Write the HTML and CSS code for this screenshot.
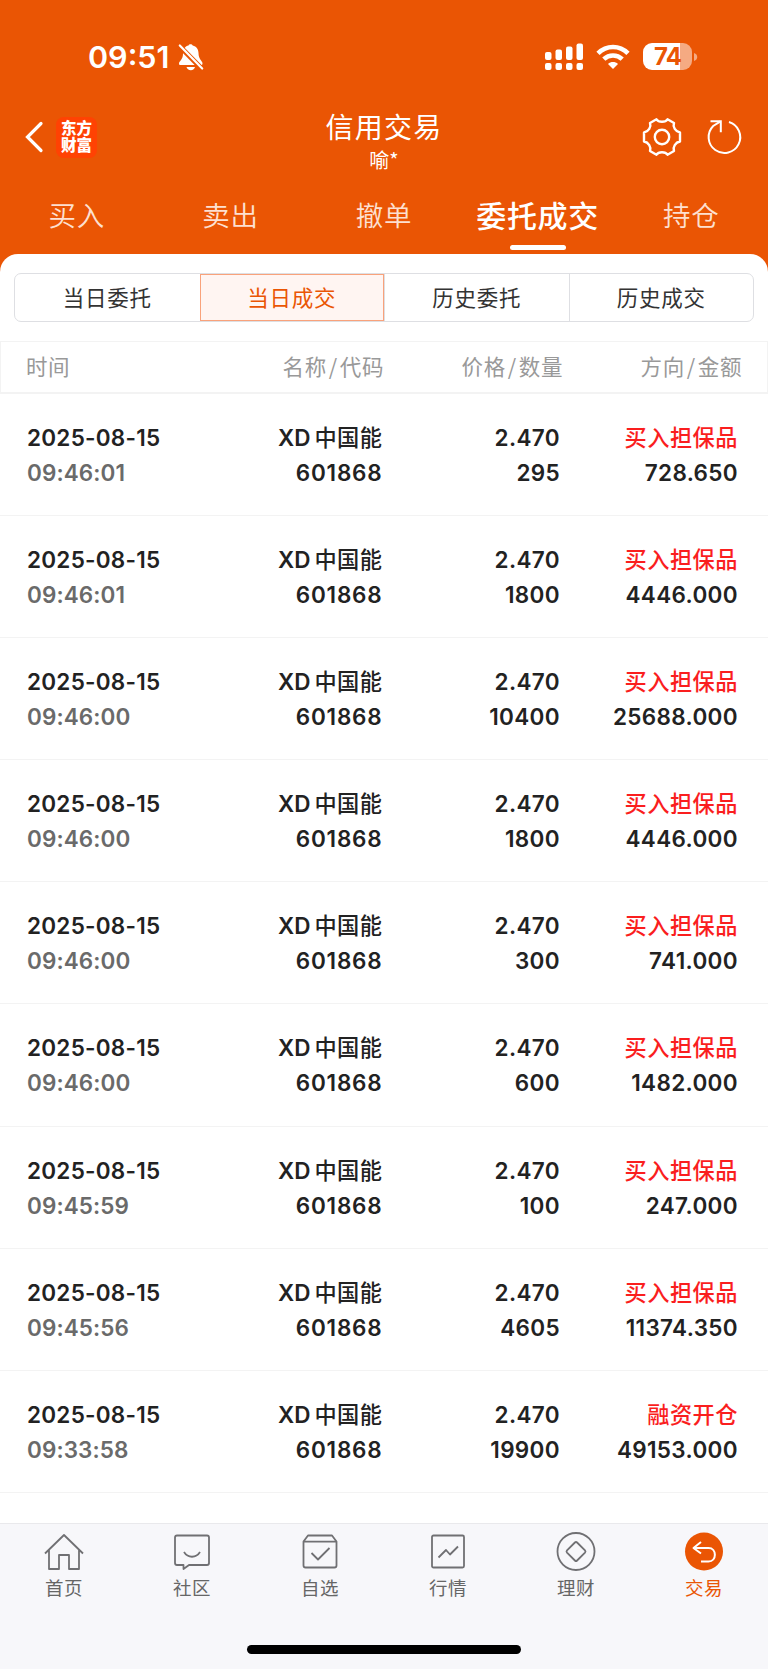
FILE: index.html
```html
<!DOCTYPE html>
<html lang="zh-CN">
<head>
<meta charset="utf-8">
<title>信用交易</title>
<link rel="stylesheet" href="styles.css">
</head>
<body>
<div class="screen">
  <header class="top">
    <div class="status">
      <div class="status-left">
        <span class="clock">09:51</span>
        <svg class="bell" width="26" height="28" viewBox="0 0 26 28">
          <path d="M1 20.500C1 18 5 17 5 10.500C5 6 7.500 3 10.500 2.500C11 .8 14 .8 14.700 2.500C18.500 3.200 20.500 6.500 20.500 10C20.500 16.500 24.500 18 24.500 20.500C24.500 21.600 23.800 22 23 22H2.500C1.600 22 1 21.600 1 20.500Z" fill="#fff"/>
          <path d="M8.500 24H17C16.500 26 15 27.200 12.800 27.200S9 26 8.500 24Z" fill="#fff"/>
          <path d="M-1 .5L25 27" stroke="#ea5504" stroke-width="5"/>
          <path d="M1.800 2.500L24.200 25.500" stroke="#fff" stroke-width="2.200" stroke-linecap="round"/>
        </svg>
      </div>
      <div class="status-right">
        <svg width="39" height="28" viewBox="0 0 39 28" fill="#fff">
          <rect x="0" y="9" width="6.500" height="8" rx="2"/><rect x="10.500" y="6.500" width="6.500" height="10.500" rx="2"/><rect x="21" y="3.500" width="6.500" height="13.500" rx="2"/><rect x="31.500" y="0.500" width="6.500" height="16.500" rx="2"/>
          <rect x="0" y="20" width="6.500" height="7" rx="2"/><rect x="10.500" y="20" width="6.500" height="7" rx="2"/><rect x="21" y="20" width="6.500" height="7" rx="2"/><rect x="31.500" y="20" width="6.500" height="7" rx="2"/>
        </svg>
        <svg class="wifi" width="34" height="26" viewBox="0 0 34 26" fill="none" stroke="#fff" stroke-width="4.600">
          <path d="M2 9.300C10.500 .9 23.500 .9 32 9.300"/>
          <path d="M7.800 15.200C13 10.200 21 10.200 26.200 15.200"/>
          <path d="M17 25L12 20C14.800 17.400 19.200 17.400 22 20Z" fill="#fff" stroke="none"/>
        </svg>
        <div class="battery"><span class="battery-body">74</span><svg width="4" height="8" viewBox="0 0 4 8"><path d="M0 0C4.300 1.300 4.300 6.700 0 8Z" fill="#f5aa82"/></svg></div>
      </div>
    </div>

    <div class="nav">
      <div class="nav-left">
        <svg width="18" height="32" viewBox="0 0 18 32"><path d="M16 2.500L2.500 16L16 29.500" fill="none" stroke="#fff" stroke-width="3.200" stroke-linecap="round"/></svg>
        <div class="logo">东方财富</div>
      </div>
      <div class="heading"><h1>信用交易</h1><p>喻*</p></div>
      <div class="nav-right">
        <svg width="40" height="40" viewBox="0 0 40 40" fill="none" stroke="#fff" stroke-width="2.400" stroke-linejoin="round">
          <path d="M14.500 2.300C16.500 5.500 23.500 5.500 25.500 2.300L32 6C30.500 10 33.500 14.700 38 15.500V24.500C33.500 25.300 30.500 30 32 34L25.500 37.700C23.500 34.500 16.500 34.500 14.500 37.700L8 34C9.500 30 6.500 25.300 2 24.500V15.500C6.500 14.700 9.500 10 8 6Z"/>
          <circle cx="20" cy="20" r="7.200"/>
        </svg>
        <svg width="36" height="36" viewBox="0 0 36 36" fill="none" stroke="#fff" stroke-width="2">
          <path d="M22 3A15.800 15.800 0 1 1 6.200 7L13.500 2.300"/>
          <path d="M3.500 2.300H13.800V13.200"/>
        </svg>
      </div>
    </div>

    <nav class="tabs">
      <span class="tab">买入</span><span class="tab">卖出</span><span class="tab">撤单</span><span class="tab tab-active">委托成交</span><span class="tab">持仓</span>
    </nav>
  </header>

  <main class="panel">
    <div class="segments">
      <span class="segment">当日委托</span><span class="segment segment-active">当日成交</span><span class="segment">历史委托</span><span class="segment">历史成交</span>
    </div>
    <div class="table-head"><span>时间</span><span>名称<i>/</i>代码</span><span>价格<i>/</i>数量</span><span>方向<i>/</i>金额</span></div>
    <div class="rows">
      <div class="row"><div><u>2025-08-15</u><br><em>09:46:01</em></div><div class="stock"><b>XD</b><s>中国能</s><br>601868</div><div>2.470<br>295</div><div><strong>买入担保品</strong><br>728.650</div></div>
      <div class="row"><div><u>2025-08-15</u><br><em>09:46:01</em></div><div class="stock"><b>XD</b><s>中国能</s><br>601868</div><div>2.470<br>1800</div><div><strong>买入担保品</strong><br>4446.000</div></div>
      <div class="row"><div><u>2025-08-15</u><br><em>09:46:00</em></div><div class="stock"><b>XD</b><s>中国能</s><br>601868</div><div>2.470<br>10400</div><div><strong>买入担保品</strong><br>25688.000</div></div>
      <div class="row"><div><u>2025-08-15</u><br><em>09:46:00</em></div><div class="stock"><b>XD</b><s>中国能</s><br>601868</div><div>2.470<br>1800</div><div><strong>买入担保品</strong><br>4446.000</div></div>
      <div class="row"><div><u>2025-08-15</u><br><em>09:46:00</em></div><div class="stock"><b>XD</b><s>中国能</s><br>601868</div><div>2.470<br>300</div><div><strong>买入担保品</strong><br>741.000</div></div>
      <div class="row"><div><u>2025-08-15</u><br><em>09:46:00</em></div><div class="stock"><b>XD</b><s>中国能</s><br>601868</div><div>2.470<br>600</div><div><strong>买入担保品</strong><br>1482.000</div></div>
      <div class="row"><div><u>2025-08-15</u><br><em>09:45:59</em></div><div class="stock"><b>XD</b><s>中国能</s><br>601868</div><div>2.470<br>100</div><div><strong>买入担保品</strong><br>247.000</div></div>
      <div class="row"><div><u>2025-08-15</u><br><em>09:45:56</em></div><div class="stock"><b>XD</b><s>中国能</s><br>601868</div><div>2.470<br>4605</div><div><strong>买入担保品</strong><br>11374.350</div></div>
      <div class="row"><div><u>2025-08-15</u><br><em>09:33:58</em></div><div class="stock"><b>XD</b><s>中国能</s><br>601868</div><div>2.470<br>19900</div><div><strong>融资开仓</strong><br>49153.000</div></div>
    </div>
  </main>

  <footer class="bottom">
    <nav class="dock">
      <a class="dock-item"><svg viewBox="0 0 40 40"><path d="M1 21.500L20 3L39 21.500M5 18V37H15V23H25V37H35V18"/></svg>首页</a>
      <a class="dock-item"><svg viewBox="0 0 40 40"><path d="M5 3.500H35Q37 3.500 37 5.500V31Q37 33 35 33H17L11.500 37V33H5Q3 33 3 31V5.500Q3 3.500 5 3.500ZM12 20C16 26.300 24 26.300 28 20"/></svg>社区</a>
      <a class="dock-item"><svg viewBox="0 0 40 40"><path d="M3.500 9.500L8 3.500H32L36.500 9.500V33.500Q36.500 35.500 34.500 35.500H5.500Q3.500 35.500 3.500 33.500ZM3.500 9.700H36.500M11.500 21L18 27.500L29.500 16"/></svg>自选</a>
      <a class="dock-item"><svg viewBox="0 0 40 40"><rect x="4" y="3.500" width="32" height="32" rx="1.500"/><path d="M10.500 25.500L18 18L22 22.500L30 14.500"/></svg>行情</a>
      <a class="dock-item"><svg viewBox="0 0 40 40"><circle cx="20" cy="19.500" r="18.500"/><path d="M18.900 10.500Q20 9.400 21.100 10.500L29 18.400Q30 19.500 29 20.600L21.100 28.500Q20 29.600 18.900 28.500L11 20.600Q10 19.500 11 18.400Z"/></svg>理财</a>
      <a class="dock-item dock-active"><svg viewBox="0 0 40 40"><circle class="disc" cx="20" cy="19.500" r="19"/><path class="arrow" d="M17 10L9.500 16L17 21.500M9.500 16H24.500C33 16 33 29.500 24.500 29.500H17"/></svg>交易</a>
    </nav>
    <div class="home-bar"></div>
  </footer>
</div>
</body>
</html>
```
FILE: styles.css
```css
* { box-sizing: border-box; }
body {
  margin: 0;
  background: #ea5504;
  font-family: Inter, "Noto Sans CJK SC", sans-serif;
  color: #222;
}
.screen { width: 768px; height: 1669px; display: flex; flex-direction: column; overflow: hidden; white-space: nowrap; }
svg { display: block; flex: none; overflow: visible; }

.top { height: 254px; flex: none; color: #fff; }
.status { height: 96px; padding: 42px 70px 0 88px; display: flex; justify-content: space-between; align-items: flex-start; }
.status-left { display: flex; align-items: center; gap: 9px; height: 30px; }
.clock { font-size: 30.500px; font-weight: 600; line-height: 30px; letter-spacing: 0; }
.status-right { display: flex; padding-top: 1px; }
.wifi { margin: 1px 13px 0 12px; }
.battery { display: flex; align-items: center; gap: 2px; height: 27px; }
.battery-body {
  width: 49px; height: 27px; border-radius: 9px;
  background: linear-gradient(90deg, #fff 37px, #f5aa82 37px);
  color: #ea5504; font-size: 24px; font-weight: 700; line-height: 27px; text-align: center; letter-spacing: -1px;
}

.nav { height: 84px; padding: 0 25px 0 25px; display: grid; grid-template-columns: 1fr auto 1fr; }
.nav-left { display: flex; height: 82px; align-items: center; gap: 13px; }
.logo {
  width: 41px; height: 41px; padding: 2px 4px 0 5px; border-radius: 8px; background: #ff4203;
  font: 900 15.500px/17px "Noto Sans CJK SC", sans-serif; white-space: normal;
}
.heading { text-align: center; font-family: "Noto Sans CJK SC", sans-serif; padding-top: 11px; }
.heading h1 { margin: 0; font-size: 28px; font-weight: 400; line-height: 38px; letter-spacing: 1.200px; }
.heading p { margin: 0; font-size: 20px; line-height: 29px; }
.nav-right { display: flex; height: 82px; align-items: center; justify-content: flex-end; gap: 25px; }

.tabs { display: grid; grid-template-columns: repeat(5, 1fr); }
.tab {
  height: 71px; display: flex; flex-direction: column; align-items: center;
  font: 350 27.500px/68px "Noto Sans CJK SC", sans-serif; letter-spacing: .7px; color: #fde0d1;
}
.tab-active { font-size: 30px; font-weight: 500; color: #fff; }
.tab-active::after { content: ""; width: 56px; height: 5px; border-radius: 3px; background: #fff; margin-top: -3px; flex: none; }

.panel { flex: 1; background: #fff; border-radius: 18px 18px 0 0; padding-top: 19px; }
.segments { margin: 0 14px; height: 49px; border: 1px solid #dedfe3; border-radius: 7px; display: grid; grid-template-columns: repeat(4, 1fr); }
.segment { font: 400 21.500px/45px "Noto Sans CJK SC", sans-serif; letter-spacing: .8px; text-align: center; border-left: 1px solid #dedfe3; color: #333; }
.segment:first-child { border-left: 0; }
.segment-active { border: 1px solid #f9a27b; background: #fff5f2; color: #ea5504; line-height: 43px; }

.table-head {
  margin-top: 19px; height: 53px; padding: 0 25px 0 25px;
  border: 1px solid #f3f3f3; border-bottom-width: 2px;
  display: grid; grid-template-columns: 179px 179px 179px 179px;
  font: 400 21.500px/48px "Noto Sans CJK SC", sans-serif; letter-spacing: .6px; color: #999;
}
.table-head i { font-style: normal; padding: 0 2px; }
.table-head span + span { text-align: right; }

.row {
  height: 122.100px; padding: 26px 31px 0 27px; border-bottom: 1px solid #f3f3f3;
  display: grid; grid-template-columns: 177.500px 178px 177.500px 178px;
  font-size: 22.500px; font-weight: 600; line-height: 35px; letter-spacing: .35px;
}
.row div + div { text-align: right; }
.row .stock { letter-spacing: .8px; }
.row u { text-decoration: none; letter-spacing: .25px; }
.row em { font-style: normal; color: #6a6a6a; letter-spacing: .1px; }
.row b { font-weight: 600; margin-right: 4px; letter-spacing: 0; }
.row s, .row strong { font: 500 22.200px/1 "Noto Sans CJK SC", sans-serif; text-decoration: none; letter-spacing: .5px; }
.row strong { color: #fa1e1e; }

.bottom { height: 146px; flex: none; background: #f7f7fa; border-top: 1px solid #e9e9ec; }
.dock { height: 121px; display: grid; grid-template-columns: repeat(6, 1fr); }
.dock-item {
  display: flex; flex-direction: column; align-items: center; padding-top: 8px;
  font: 400 18.500px/28px "Noto Sans CJK SC", sans-serif; letter-spacing: .6px; color: #666;
}
.dock-item svg { width: 40px; height: 40px; margin-bottom: 1px; fill: none; stroke: #707073; stroke-width: 1.800; stroke-linejoin: round; }
.dock-active { color: #ea5504; }
.dock-item .disc { fill: #ea5504; stroke: none; }
.dock-item .arrow { stroke: #fff; stroke-width: 2; }
.home-bar { width: 274px; height: 9px; border-radius: 5px; background: #000; margin: 0 auto; }
```
